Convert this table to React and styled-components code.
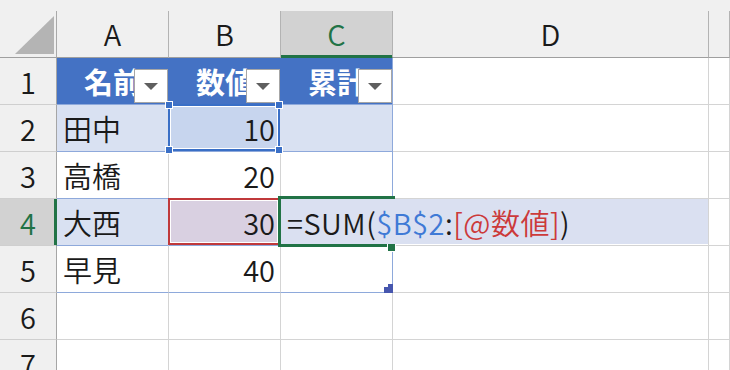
import React from "react";
import styled, { createGlobalStyle, css } from "styled-components";

const GlobalStyle = createGlobalStyle`
  html, body {
    margin: 0;
    padding: 0;
    background: #ffffff;
  }
  body {
    font-family: "Noto Sans CJK JP", "Noto Sans", sans-serif;
    overflow: hidden;
  }
`;

const GRID = "#d4d4d4";
const TABLE_LINE = "#8ea9db";
const HEAD_BLUE = "#4472c4";
const BAND = "#d9e1f2";
const ACTIVE = "#217346";

const Sheet = styled.div`
  display: grid;
  grid-template-columns: 57px 112px 112px 112px 316px 1fr;
  grid-template-rows: 11px 47px repeat(7, 47px);
  width: 730px;
  height: 370px;
  overflow: hidden;
  background: #f0f0f0;
  font-size: 29px;
  font-weight: 350;
  color: #1a1a1a;
`;

const TopStrip = styled.div`
  grid-column: 1 / -1;
  background: #f0f0f0;
`;

const Corner = styled.div`
  display: flex;
  align-items: flex-end;
  justify-content: flex-end;
  padding: 0 2px 3px 0;
  background: #f0f0f0;
  border-right: 1px solid #a9a9a9;
  border-bottom: 1px solid #9f9f9f;
`;

const ColHead = styled.div`
  display: flex;
  align-items: center;
  justify-content: center;
  background: ${(p) => (p.$selected ? "#d2d2d2" : "#f0f0f0")};
  color: ${(p) => (p.$selected ? ACTIVE : "#1a1a1a")};
  border-right: 1px solid #b3b3b3;
  border-bottom: 1px solid ${(p) => (p.$selected ? ACTIVE : "#9f9f9f")};
  box-shadow: ${(p) => (p.$selected ? `inset 0 -2px 0 ${ACTIVE}` : "none")};
  padding-bottom: 2px;
`;

const RowHead = styled.div`
  display: flex;
  align-items: center;
  justify-content: center;
  background: ${(p) => (p.$selected ? "#d2d2d2" : "#f0f0f0")};
  color: ${(p) => (p.$selected ? ACTIVE : "#1a1a1a")};
  border-right: 1px solid ${(p) => (p.$selected ? ACTIVE : "#a6a6a6")};
  border-bottom: 1px solid #cfcfcf;
  box-shadow: ${(p) => (p.$selected ? `inset -2px 0 0 ${ACTIVE}` : "none")};
`;

const tones = {
  head: css`
    background: ${HEAD_BLUE};
    color: #ffffff;
    font-weight: 700;
    justify-content: center;
    border-right-color: ${HEAD_BLUE};
    border-bottom-color: ${TABLE_LINE};
  `,
  band: css`
    background: ${BAND};
    border-right-color: ${BAND};
    border-bottom-color: ${TABLE_LINE};
  `,
  plain: css`
    background: #ffffff;
    border-bottom-color: ${TABLE_LINE};
  `,
  blank: css`
    background: #ffffff;
  `,
};

const Cell = styled.div`
  position: relative;
  display: flex;
  align-items: center;
  justify-content: ${(p) => (p.$right ? "flex-end" : "flex-start")};
  padding: 0 5px 0 6px;
  border-right: 1px solid ${GRID};
  border-bottom: 1px solid ${GRID};
  white-space: nowrap;
  ${(p) => tones[p.$tone]}
  ${(p) => p.$edge && css`border-right-color: ${TABLE_LINE};`}
  ${(p) => p.$fill && css`background: ${p.$fill};`}
  ${(p) => p.$span && css`grid-column: span ${p.$span};`}
`;

const FilterButton = styled.div`
  position: absolute;
  right: 0;
  bottom: 1px;
  width: 34px;
  height: 34px;
  box-sizing: border-box;
  background: #ffffff;
  border: 1px solid #a6a6a6;
  display: flex;
  align-items: center;
  justify-content: center;
  z-index: 2;
`;

const RefFrame = styled.div`
  position: absolute;
  top: -1px;
  left: -1px;
  right: 0;
  bottom: 0;
  border: 2px solid ${(p) => p.$color};
  box-shadow: inset 0 0 0 1px #ffffff;
  z-index: 3;
  pointer-events: none;
`;

const Knob = styled.span`
  position: absolute;
  width: 6px;
  height: 6px;
  background: ${(p) => p.$color};
  border: 1px solid #ffffff;
  ${(p) => (p.$top ? "top: -5px;" : "bottom: -5px;")}
  ${(p) => (p.$left ? "left: -5px;" : "right: -5px;")}
`;

const ActiveFrame = styled.div`
  position: absolute;
  left: -3px;
  top: -3px;
  width: 117px;
  height: 51px;
  box-sizing: border-box;
  border: 3px solid ${ACTIVE};
  z-index: 4;
`;

const FillHandle = styled.span`
  position: absolute;
  left: 106px;
  top: 44px;
  width: 7px;
  height: 7px;
  background: ${ACTIVE};
  border: 1px solid #ffffff;
  z-index: 4;
`;

const Editor = styled.div`
  position: absolute;
  left: 0;
  top: 0;
  right: 0;
  bottom: 1px;
  display: flex;
  align-items: center;
  padding-left: 6px;
  background: #dae0f1;
  z-index: 5;
  white-space: nowrap;
  letter-spacing: 0.5px;
`;

const Token = styled.span`
  color: ${(p) => p.$color || "#1a1a1a"};
`;

const ResizeGrip = styled.svg`
  position: absolute;
  right: -1px;
  bottom: -1px;
  z-index: 3;
`;

const DropArrow = () => (
  <svg width="14" height="7" viewBox="0 0 14 7">
    <polygon points="0,0 14,0 7,7" fill="#5f5f5f" />
  </svg>
);

const SelectAll = () => (
  <svg width="39" height="38" viewBox="0 0 39 38">
    <polygon points="39,0 39,38 0,38" fill="#b4b4b4" />
  </svg>
);

const columns = ["A", "B", "C", "D", ""];

const people = [
  { row: 2, name: "田中", value: 10, band: true },
  { row: 3, name: "高橋", value: 20 },
  { row: 4, name: "大西", value: 30, band: true },
  { row: 5, name: "早見", value: 40 },
];

const Formula = () => (
  <Editor>
    <Token>=SUM(</Token>
    <Token $color="#3f7ad6">$B$2</Token>
    <Token>:</Token>
    <Token $color="#cc3a3a">[@数値]</Token>
    <Token>)</Token>
  </Editor>
);

export default function App() {
  return (
    <>
      <GlobalStyle />
      <Sheet>
        <TopStrip />
        <Corner>
          <SelectAll />
        </Corner>
        {columns.map((c, i) => (
          <ColHead key={i} $selected={c === "C"}>
            {c}
          </ColHead>
        ))}

        <RowHead>1</RowHead>
        {["名前", "数値", "累計"].map((t, i) => (
          <Cell key={t} $tone="head" $edge={i === 2}>
            {t}
            <FilterButton>
              <DropArrow />
            </FilterButton>
          </Cell>
        ))}
        <Cell $tone="blank" />
        <Cell $tone="blank" />

        {people.map((p) => {
          const tone = p.band ? "band" : "plain";
          const isActive = p.row === 4;
          return (
            <React.Fragment key={p.row}>
              <RowHead $selected={isActive}>{p.row}</RowHead>
              <Cell $tone={tone}>{p.name}</Cell>
              <Cell
                $tone={tone}
                $right
                $fill={p.row === 2 ? "#c7d5ee" : isActive ? "#d9d0e1" : null}
              >
                {p.value}
                {p.row === 2 && (
                  <RefFrame $color="#3a6fc6">
                    <Knob $color="#3a6fc6" $top $left />
                    <Knob $color="#3a6fc6" $top />
                    <Knob $color="#3a6fc6" $left />
                    <Knob $color="#3a6fc6" />
                  </RefFrame>
                )}
                {isActive && <RefFrame $color="#c0393b" />}
              </Cell>
              {isActive ? (
                <Cell $tone="blank" $span={2}>
                  <ActiveFrame />
                  <FillHandle />
                  <Formula />
                </Cell>
              ) : (
                <>
                  <Cell $tone={tone} $edge>
                    {p.row === 5 && (
                      <ResizeGrip width="9" height="9" viewBox="0 0 9 9">
                        <rect x="0" y="3" width="9" height="6" fill="#4656ae" />
                        <rect x="4" y="0" width="5" height="4" fill="#4656ae" />
                      </ResizeGrip>
                    )}
                  </Cell>
                  <Cell $tone="blank" />
                </>
              )}
              <Cell $tone="blank" />
            </React.Fragment>
          );
        })}

        {[6, 7].map((r) => (
          <React.Fragment key={r}>
            <RowHead>{r}</RowHead>
            {columns.map((c, i) => (
              <Cell key={i} $tone="blank" />
            ))}
          </React.Fragment>
        ))}
      </Sheet>
    </>
  );
}
